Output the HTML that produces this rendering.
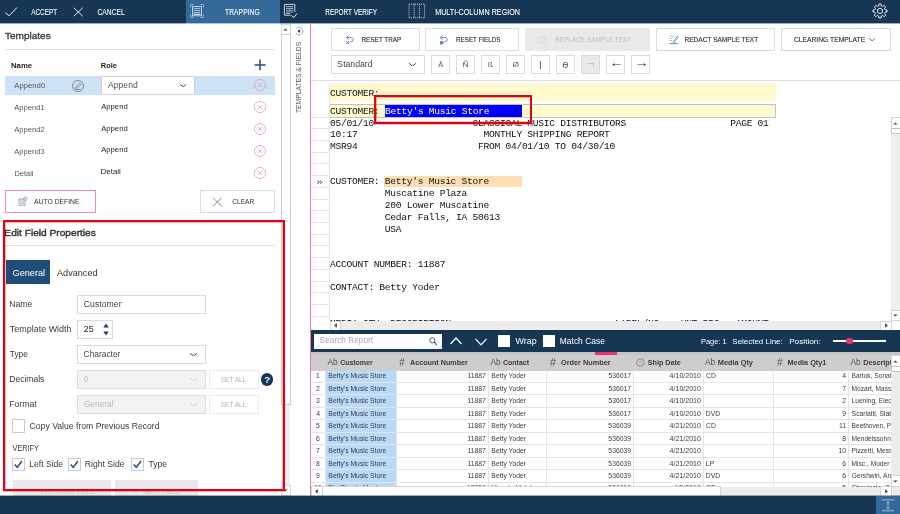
<!DOCTYPE html>
<html><head><meta charset="utf-8"><title>Trapping</title>
<style>
*{box-sizing:border-box;margin:0;padding:0}
html,body{width:900px;height:514px;overflow:hidden;background:#fff}
body{font-family:"Liberation Sans",sans-serif;font-size:9px;color:#333;position:relative}
#app{position:absolute;left:0;top:0;width:900px;height:514px;overflow:hidden;will-change:transform}
.a{position:absolute}
.t{position:absolute;white-space:nowrap;line-height:1;transform-origin:0 0}
.m{position:absolute;white-space:pre;font-family:"Liberation Mono","DejaVu Sans Mono",monospace;font-size:9.6px;letter-spacing:-0.275px;line-height:11.78px;color:#111}
</style></head><body>
<div id="app">
<div class="a" style="left:0px;top:0px;width:900px;height:23.4px;background:#173654;"></div>
<div class="a" style="left:185.75px;top:0px;width:94.25px;height:23.4px;background:#336a99;"></div>
<div class="a" style="left:0px;top:23px;width:900px;height:1px;background:#a2afbb;"></div>
<div class="a" style="left:186px;top:23px;width:94px;height:1px;background:#acc2d6;"></div>
<svg class="a" style="left:4px;top:6px" width="15" height="12" viewBox="0 0 15 12"><path d="M1.3 6.7L5.2 9.8L13 1.5" stroke="#fff" stroke-width="0.9" fill="none"/></svg>
<span class="t" style="left:0;top:8px;font-size:8.5px;color:#fff;transform:matrix(0.752,0,0,1,31.20,0);-webkit-text-stroke:0.08px #fff;">ACCEPT</span>
<svg class="a" style="left:73px;top:7px" width="11" height="10" viewBox="0 0 11 10"><path d="M0.8 0.8L9.8 9.2M9.8 0.8L0.8 9.2" stroke="#fff" stroke-width="0.9" fill="none"/></svg>
<span class="t" style="left:0;top:8px;font-size:8.5px;color:#fff;transform:matrix(0.790,0,0,1,97.48,0);-webkit-text-stroke:0.08px #fff;">CANCEL</span>
<svg class="a" style="left:189px;top:3px" width="16" height="16" viewBox="0 0 16 16"><path d="M1.5 4.3V2.5Q1.5 1.5 2.5 1.5H4.3M11.7 1.5H13.5Q14.5 1.5 14.5 2.5V4.3M14.5 11.7V13.5Q14.5 14.5 13.5 14.5H11.7M4.3 14.5H2.5Q1.5 14.5 1.5 13.5V11.7" stroke="#c3d5e6" stroke-width="0.8" fill="none"/><rect x="3.5" y="3.6" width="9" height="9.2" fill="none" stroke="#dce7f1" stroke-width="0.85"/><path d="M4.8 5.5H11.2M4.8 7.5H11.2M4.8 9.5H11.2" stroke="#dbe7f2" stroke-width="0.7"/><path d="M4.6 11.3H11.4" stroke="#b9cde0" stroke-width="1.4"/></svg>
<span class="t" style="left:0;top:8px;font-size:8.5px;color:#fff;transform:matrix(0.796,0,0,1,225.09,0);-webkit-text-stroke:0.08px #fff;">TRAPPING</span>
<svg class="a" style="left:283px;top:3px" width="16" height="16" viewBox="0 0 16 16"><path d="M11.8 9V1.4H1.4V12.2H7.5" fill="none" stroke="#e0e8f0" stroke-width="0.9"/><path d="M3 3.6H10.2M3 5.4H10.2M3 7.2H10.2M3 9H10.2M3 10.6H7" stroke="#c8d4e0" stroke-width="0.8"/><path d="M8.4 12.4L10.8 14.6L14 10.6" fill="none" stroke="#fff" stroke-width="0.9"/></svg>
<span class="t" style="left:0;top:8px;font-size:8.5px;color:#fff;transform:matrix(0.760,0,0,1,325.22,0);-webkit-text-stroke:0.08px #fff;">REPORT VERIFY</span>
<svg class="a" style="left:408px;top:3px" width="18" height="16" viewBox="0 0 18 16"><rect x="1" y="1.2" width="15.6" height="13.6" fill="none" stroke="#dfe8f0" stroke-width="0.9" stroke-dasharray="1 1"/><path d="M6.2 1.2V14.8M11.4 1.2V14.8" stroke="#dfe8f0" stroke-width="0.9" stroke-dasharray="1 1"/></svg>
<span class="t" style="left:0;top:8px;font-size:8.5px;color:#fff;transform:matrix(0.845,0,0,1,435.16,0);-webkit-text-stroke:0.08px #fff;">MULTI-COLUMN REGION</span>
<svg class="a" style="left:872.3px;top:3.1px" width="16" height="16" viewBox="0 0 16 16"><g transform="translate(8,8)" fill="none" stroke="#fff" stroke-width="0.85"><circle r="2.6"/><path d="M5.03 -1.34L7.03 -0.99L7.03 0.99L5.03 1.34L4.50 2.61L5.67 4.27L4.27 5.67L2.61 4.50L1.34 5.03L0.99 7.03L-0.99 7.03L-1.34 5.03L-2.61 4.50L-4.27 5.67L-5.67 4.27L-4.50 2.61L-5.03 1.34L-7.03 0.99L-7.03 -0.99L-5.03 -1.34L-4.50 -2.61L-5.67 -4.27L-4.27 -5.67L-2.61 -4.50L-1.34 -5.03L-0.99 -7.03L0.99 -7.03L1.34 -5.03L2.61 -4.50L4.27 -5.67L5.67 -4.27L4.50 -2.61Z"/></g></svg>
<span class="t" style="left:0;top:31px;font-size:9.6px;color:#444;transform:matrix(1.044,0,0,1,4.99,0);-webkit-text-stroke:0.4px #444;">Templates</span>
<div class="a" style="left:5px;top:48.5px;width:269.5px;height:1.0px;background:#dedede;"></div>
<span class="t" style="left:0;top:62px;font-size:7.2px;color:#222;transform:matrix(1.085,0,0,1,10.96,0);font-weight:700;">Name</span>
<span class="t" style="left:0;top:62px;font-size:7.2px;color:#222;transform:matrix(1.040,0,0,1,100.73,0);font-weight:700;">Role</span>
<svg class="a" style="left:254px;top:59px" width="12" height="12" viewBox="0 0 12 12"><path d="M6 0.5V11.3M0.6 5.9H11.6" stroke="#1f4e79" stroke-width="1.5" fill="none"/></svg>
<div class="a" style="left:5px;top:76px;width:269.5px;height:19px;background:#cde1f7;"></div>
<span class="t" style="left:0;top:82px;font-size:7.4px;color:#555;transform:matrix(1.046,0,0,1,14.25,0);">Append0</span>
<svg class="a" style="left:72px;top:79.75px" width="12" height="12" viewBox="0 0 12 12"><circle cx="6" cy="6" r="5.5" fill="none" stroke="#666" stroke-width="0.7"/><path d="M3.4 8.7L3.9 6.9L7.7 3.1L8.9 4.3L5.1 8.1Z" stroke="#666" stroke-width="0.65" fill="none"/><path d="M3.6 9.4H8.6" stroke="#666" stroke-width="0.6"/></svg>
<div class="a" style="left:101px;top:76px;width:94px;height:19px;background:#fff;border:1px solid #d0d0d0;"></div>
<span class="t" style="left:0;top:81px;font-size:8.6px;color:#555;transform:matrix(1.005,0,0,1,108.00,0);">Append</span>
<svg class="a" style="left:180px;top:84px" width="6.400000000000006" height="3.4000000000000057" viewBox="0 0 6.400000000000006 3.4000000000000057"><path d="M0.3 0.4L3.200000000000003 2.9000000000000057L6.100000000000006 0.4" stroke="#444" stroke-width="1" fill="none"/></svg>
<span class="t" style="left:0;top:104px;font-size:7.4px;color:#555;transform:matrix(1.026,0,0,1,14.25,0);">Append1</span>
<span class="t" style="left:0;top:103px;font-size:7.4px;color:#222;transform:matrix(1.036,0,0,1,101.25,0);">Append</span>
<span class="t" style="left:0;top:126px;font-size:7.4px;color:#555;transform:matrix(1.026,0,0,1,14.25,0);">Append2</span>
<span class="t" style="left:0;top:125px;font-size:7.4px;color:#222;transform:matrix(1.036,0,0,1,101.25,0);">Append</span>
<span class="t" style="left:0;top:148px;font-size:7.4px;color:#555;transform:matrix(1.026,0,0,1,14.25,0);">Append3</span>
<span class="t" style="left:0;top:146px;font-size:7.4px;color:#222;transform:matrix(1.036,0,0,1,101.25,0);">Append</span>
<span class="t" style="left:0;top:170px;font-size:7.4px;color:#555;transform:matrix(1.011,0,0,1,14.39,0);">Detail</span>
<span class="t" style="left:0;top:168px;font-size:7.4px;color:#222;transform:matrix(1.067,0,0,1,100.61,0);">Detail</span>
<svg class="a" style="left:254.1px;top:79.3px" width="12" height="12" viewBox="0 0 12 12"><circle cx="6" cy="6" r="5.6" fill="none" stroke="#e8919f" stroke-width="0.7"/><path d="M3.8 3.8L8.2 8.2M8.2 3.8L3.8 8.2" stroke="#e8919f" stroke-width="0.7"/></svg>
<svg class="a" style="left:254.1px;top:101.3px" width="12" height="12" viewBox="0 0 12 12"><circle cx="6" cy="6" r="5.6" fill="none" stroke="#e8919f" stroke-width="0.7"/><path d="M3.8 3.8L8.2 8.2M8.2 3.8L3.8 8.2" stroke="#e8919f" stroke-width="0.7"/></svg>
<svg class="a" style="left:254.1px;top:123.2px" width="12" height="12" viewBox="0 0 12 12"><circle cx="6" cy="6" r="5.6" fill="none" stroke="#e8919f" stroke-width="0.7"/><path d="M3.8 3.8L8.2 8.2M8.2 3.8L3.8 8.2" stroke="#e8919f" stroke-width="0.7"/></svg>
<svg class="a" style="left:254.1px;top:145.10000000000002px" width="12" height="12" viewBox="0 0 12 12"><circle cx="6" cy="6" r="5.6" fill="none" stroke="#e8919f" stroke-width="0.7"/><path d="M3.8 3.8L8.2 8.2M8.2 3.8L3.8 8.2" stroke="#e8919f" stroke-width="0.7"/></svg>
<svg class="a" style="left:254.1px;top:167.0px" width="12" height="12" viewBox="0 0 12 12"><circle cx="6" cy="6" r="5.6" fill="none" stroke="#e8919f" stroke-width="0.7"/><path d="M3.8 3.8L8.2 8.2M8.2 3.8L3.8 8.2" stroke="#e8919f" stroke-width="0.7"/></svg>
<div class="a" style="left:5px;top:190px;width:91px;height:23px;background:#fff;border:1px solid #f48aa8;"></div>
<svg class="a" style="left:17.5px;top:196px" width="10" height="10" viewBox="0 0 10 10"><rect x="0.9" y="2.9" width="6.2" height="6.4" fill="none" stroke="#4a6a8c" stroke-width="0.8" stroke-dasharray="0.9 0.5"/><path d="M3 3V9.2M5 3V9.2M1 5H7M1 7.1H7" stroke="#6f8cab" stroke-width="0.7" stroke-dasharray="0.8 0.6"/><path d="M7.4 0.4L8 2L9.6 2.6L8 3.2L7.4 4.8L6.8 3.2L5.2 2.6L6.8 2Z" fill="#fff" stroke="#5f7f9f" stroke-width="0.55"/></svg>
<span class="t" style="left:0;top:198px;font-size:8px;color:#303030;transform:matrix(0.849,0,0,1,34.00,0);">AUTO DEFINE</span>
<div class="a" style="left:200px;top:190px;width:75px;height:23px;background:#fff;border:1px solid #dcdcdc;"></div>
<svg class="a" style="left:212px;top:196.5px" width="11" height="10" viewBox="0 0 11 10"><path d="M0.7 0.6L10 9.4M10 0.6L0.7 9.4" stroke="#44658a" stroke-width="0.7" fill="none"/></svg>
<span class="t" style="left:0;top:198px;font-size:8px;color:#303030;transform:matrix(0.830,0,0,1,232.17,0);">CLEAR</span>
<span class="t" style="left:0;top:228px;font-size:9.8px;color:#333;transform:matrix(1.037,0,0,1,4.37,0);-webkit-text-stroke:0.4px #333;">Edit Field Properties</span>
<div class="a" style="left:5px;top:244.7px;width:269.5px;height:1.0px;background:#dedede;"></div>
<div class="a" style="left:6.25px;top:259.75px;width:43.95px;height:24.25px;background:#1f4e79;"></div>
<span class="t" style="left:0;top:268px;font-size:9.8px;color:#fff;transform:matrix(0.935,0,0,1,12.53,0);">General</span>
<span class="t" style="left:0;top:268px;font-size:9.8px;color:#333;transform:matrix(0.930,0,0,1,57.00,0);">Advanced</span>
<span class="t" style="left:0;top:300px;font-size:8.3px;color:#3a3a3a;transform:matrix(1.043,0,0,1,9.27,0);">Name</span>
<div class="a" style="left:77px;top:295px;width:129px;height:19px;background:#fff;border:1px solid #dadada;"></div>
<span class="t" style="left:0;top:300px;font-size:8.3px;color:#444;transform:matrix(1.049,0,0,1,83.83,0);">Customer</span>
<span class="t" style="left:0;top:325px;font-size:8.3px;color:#3a3a3a;transform:matrix(1.080,0,0,1,9.78,0);">Template Width</span>
<div class="a" style="left:77px;top:320px;width:36px;height:19px;background:#fff;border:1px solid #dadada;"></div>
<span class="t" style="left:0;top:325px;font-size:8.3px;color:#222;transform:matrix(1.059,0,0,1,83.83,0);">25</span>
<svg class="a" style="left:102.7px;top:322.6px" width="6" height="13" viewBox="0 0 6 13"><path d="M3 0.6L5.7 4.4H0.3Z M3 12.4L5.7 8.6H0.3Z" fill="#1b4166"/></svg>
<span class="t" style="left:0;top:350px;font-size:8.3px;color:#3a3a3a;transform:matrix(1.006,0,0,1,9.80,0);">Type</span>
<div class="a" style="left:77px;top:345px;width:129px;height:19px;background:#fff;border:1px solid #dadada;"></div>
<span class="t" style="left:0;top:350px;font-size:8.3px;color:#444;transform:matrix(1.010,0,0,1,83.60,0);">Character</span>
<svg class="a" style="left:190px;top:352.6px" width="7" height="3.599999999999966" viewBox="0 0 7 3.599999999999966"><path d="M0.3 0.4L3.5 3.099999999999966L6.7 0.4" stroke="#333" stroke-width="1" fill="none"/></svg>
<span class="t" style="left:0;top:375px;font-size:8.3px;color:#3a3a3a;transform:matrix(1.027,0,0,1,9.28,0);">Decimals</span>
<div class="a" style="left:77px;top:370px;width:129px;height:19px;background:#f3f3f3;border:1px solid #dcdcdc;"></div>
<span class="t" style="left:0;top:375px;font-size:8.3px;color:#b8b8b8;transform:matrix(0.925,0,0,1,84.02,0);">0</span>
<svg class="a" style="left:190px;top:377.6px" width="7" height="3.599999999999966" viewBox="0 0 7 3.599999999999966"><path d="M0.3 0.4L3.5 3.099999999999966L6.7 0.4" stroke="#c4c4c4" stroke-width="0.8" fill="none"/></svg>
<div class="a" style="left:209px;top:370px;width:50px;height:19px;background:#fff;border:1px solid #ececec;"></div>
<span class="t" style="left:0;top:376px;font-size:7.6px;color:#b4b4b4;transform:matrix(0.853,0,0,1,220.74,0);">SET ALL</span>
<div class="a" style="left:260.75px;top:373.1px;width:12.6px;height:12.6px;border-radius:50%;background:#173654"></div>
<span class="t" style="left:0;top:376px;font-size:8.6px;color:#fff;transform:matrix(1.136,0,0,1,264.15,0);font-weight:700;">?</span>
<span class="t" style="left:0;top:400px;font-size:8.3px;color:#3a3a3a;transform:matrix(1.039,0,0,1,9.27,0);">Format</span>
<div class="a" style="left:77px;top:395px;width:129px;height:19px;background:#f3f3f3;border:1px solid #dcdcdc;"></div>
<span class="t" style="left:0;top:400px;font-size:8.3px;color:#b8b8b8;transform:matrix(1.003,0,0,1,83.90,0);">General</span>
<svg class="a" style="left:190px;top:402.6px" width="7" height="3.599999999999966" viewBox="0 0 7 3.599999999999966"><path d="M0.3 0.4L3.5 3.099999999999966L6.7 0.4" stroke="#c4c4c4" stroke-width="0.8" fill="none"/></svg>
<div class="a" style="left:209px;top:395px;width:50px;height:19px;background:#fff;border:1px solid #ececec;"></div>
<span class="t" style="left:0;top:401px;font-size:7.6px;color:#b4b4b4;transform:matrix(0.853,0,0,1,220.74,0);">SET ALL</span>
<div class="a" style="left:12px;top:419px;width:13px;height:14px;background:#fff;border:1px solid #c9c9c9;"></div>
<span class="t" style="left:0;top:422px;font-size:8.3px;color:#3a3a3a;transform:matrix(1.041,0,0,1,29.58,0);">Copy Value from Previous Record</span>
<span class="t" style="left:0;top:444px;font-size:8.3px;color:#3a3a3a;transform:matrix(0.881,0,0,1,12.50,0);">VERIFY</span>
<div class="a" style="left:12px;top:458px;width:13px;height:13px;background:#fff;border:1px solid #c9c9c9;"></div>
<svg class="a" style="left:14.25px;top:460px" width="9" height="9" viewBox="0 0 9 9"><path d="M0.7 4.4L3.2 7.4L8 1" stroke="#1f4e79" stroke-width="1.5" fill="none"/></svg>
<div class="a" style="left:68px;top:458px;width:13px;height:13px;background:#fff;border:1px solid #c9c9c9;"></div>
<svg class="a" style="left:70px;top:460px" width="9" height="9" viewBox="0 0 9 9"><path d="M0.7 4.4L3.2 7.4L8 1" stroke="#1f4e79" stroke-width="1.5" fill="none"/></svg>
<div class="a" style="left:131px;top:458px;width:13px;height:13px;background:#fff;border:1px solid #c9c9c9;"></div>
<svg class="a" style="left:133px;top:460px" width="9" height="9" viewBox="0 0 9 9"><path d="M0.7 4.4L3.2 7.4L8 1" stroke="#1f4e79" stroke-width="1.5" fill="none"/></svg>
<span class="t" style="left:0;top:460px;font-size:8.3px;color:#3a3a3a;transform:matrix(1.033,0,0,1,29.28,0);">Left Side</span>
<span class="t" style="left:0;top:460px;font-size:8.3px;color:#3a3a3a;transform:matrix(1.042,0,0,1,84.77,0);">Right Side</span>
<span class="t" style="left:0;top:460px;font-size:8.3px;color:#3a3a3a;transform:matrix(1.034,0,0,1,148.54,0);">Type</span>
<div class="a" style="left:12.5px;top:480px;width:98.75px;height:15.6px;background:#e8e8e8;"></div>
<div class="a" style="left:115px;top:480px;width:82.5px;height:15.6px;background:#e8e8e8;"></div>
<span class="t" style="left:0;top:488px;font-size:7.6px;color:#c2c2c2;transform:matrix(0.867,0,0,1,40.73,0);">PREVIOUS FIELD</span>
<span class="t" style="left:0;top:488px;font-size:7.6px;color:#c2c2c2;transform:matrix(0.855,0,0,1,143.24,0);">NEXT FIELD</span>
<span class="t" style="left:0;top:488px;font-size:7.6px;color:#c8c8c8;transform:matrix(1.053,0,0,1,25.68,0);">‹</span>
<span class="t" style="left:0;top:488px;font-size:7.6px;color:#c8c8c8;transform:matrix(1.053,0,0,1,134.18,0);">›</span>
<div class="a" style="left:281.5px;top:24px;width:8.5px;height:471.6px;background:#f0f0f0;"></div>
<div class="a" style="left:281px;top:24px;width:10px;height:11px;background:#fff;border:1px solid #d8d8d8;"></div>
<div class="a" style="left:281px;top:34px;width:10px;height:371px;background:#fff;border:1px solid #cdcdcd;"></div>
<div class="a" style="left:281px;top:485px;width:10px;height:11px;background:#fff;border:1px solid #d8d8d8;"></div>
<svg class="a" style="left:283.4px;top:28.3px" width="4.8" height="3" viewBox="0 0 4.8 3"><path d="M0.2 2.6L2.4 0.5L4.6 2.6Z" fill="#444"/></svg>
<svg class="a" style="left:283.4px;top:489.3px" width="4.8" height="3" viewBox="0 0 4.8 3"><path d="M0.2 0.4L2.4 2.5L4.6 0.4Z" fill="#444"/></svg>
<div class="a" style="left:3px;top:220px;width:282px;height:271px;border:2px solid #e30016"></div>
<div class="a" style="left:5px;top:222px;width:278px;height:1px;background:rgba(227,0,22,0.3);"></div>
<div class="a" style="left:5px;top:223px;width:1px;height:266px;background:rgba(227,0,22,0.3);"></div>
<div class="a" style="left:282px;top:223px;width:1px;height:266px;background:rgba(227,0,22,0.3);"></div>
<div class="a" style="left:3px;top:491px;width:282px;height:1px;background:rgba(227,0,22,0.3);"></div>
<svg class="a" style="left:294.2px;top:26px" width="10" height="10" viewBox="0 0 10 10"><path d="M2.2 7.6A3.9 3.9 0 1 0 2.2 2.4" fill="none" stroke="#5f8fc0" stroke-width="0.65"/><path d="M6.1 3V7L3.2 5Z" fill="#1f4e79"/></svg>
<span class="t" style="left:295.00px;top:112.93px;font-size:8px;color:#5a5a5a;transform:rotate(-90deg) scaleX(0.840);transform-origin:0 0;">TEMPLATES &amp; FIELDS</span>
<div class="a" style="left:310px;top:23.4px;width:1px;height:472.2px;background:#f27a9b;"></div>
<div class="a" style="left:331px;top:28px;width:89px;height:23px;background:#fff;border:1px solid #dcdcdc;"></div>
<svg class="a" style="left:345px;top:34.6px" width="10" height="10" viewBox="0 0 10 10"><path d="M1.6 2.5H6.1A2.15 2.15 0 0 1 6.1 6.8H5.2" fill="none" stroke="#5b7c9c" stroke-width="0.85"/><path d="M3.5 0.5L1.5 2.5L3.5 4.5" fill="none" stroke="#5b7c9c" stroke-width="0.85"/><path d="M1 6L4.2 9.2M4.2 6L1 9.2" stroke="#3f6288" stroke-width="0.85"/></svg>
<span class="t" style="left:0;top:36px;font-size:7.8px;color:#303030;transform:matrix(0.818,0,0,1,361.51,0);-webkit-text-stroke:0.15px #303030;">RESET TRAP</span>
<div class="a" style="left:425px;top:28px;width:94px;height:23px;background:#fff;border:1px solid #dcdcdc;"></div>
<svg class="a" style="left:439.3px;top:34.6px" width="10" height="10" viewBox="0 0 10 10"><path d="M1.6 2.5H6.1A2.15 2.15 0 0 1 6.1 6.8H5.2" fill="none" stroke="#5b7c9c" stroke-width="0.85"/><path d="M3.5 0.5L1.5 2.5L3.5 4.5" fill="none" stroke="#5b7c9c" stroke-width="0.85"/><rect x="1" y="6" width="3.2" height="3.4" fill="#7d98b4"/><path d="M1 7.2H4.2M1 8.4H4.2" stroke="#4a6a8c" stroke-width="0.5"/></svg>
<span class="t" style="left:0;top:36px;font-size:7.8px;color:#303030;transform:matrix(0.803,0,0,1,456.02,0);-webkit-text-stroke:0.15px #303030;">RESET FIELDS</span>
<div class="a" style="left:525px;top:28px;width:125px;height:23px;background:#e9e9e9;"></div>
<svg class="a" style="left:538.5px;top:35.6px" width="8" height="8" viewBox="0 0 8 8"><path d="M1 3A3 3 0 0 1 6.4 2.2M7 5A3 3 0 0 1 1.6 5.8" fill="none" stroke="#d2d2d2" stroke-width="0.8"/><path d="M5.2 2.4H6.8V0.8M2.8 5.6H1.2V7.2" fill="none" stroke="#d2d2d2" stroke-width="0.7"/></svg>
<span class="t" style="left:0;top:36px;font-size:7.8px;color:#bcbcbc;transform:matrix(0.827,0,0,1,555.00,0);">REPLACE SAMPLE TEXT</span>
<div class="a" style="left:656px;top:28px;width:119px;height:23px;background:#fff;border:1px solid #dcdcdc;"></div>
<svg class="a" style="left:669px;top:35px" width="10" height="9.5" viewBox="0 0 10 9.5"><path d="M0.6 1.2H5.6M0.6 3.4H4.2M0.6 5.6H3" stroke="#9fb2c6" stroke-width="0.8"/><path d="M4 6.8L8.2 1.4L9.2 2.2L5.2 7.4Z" fill="none" stroke="#4a6d90" stroke-width="0.7"/><path d="M0.4 8.6H9.2" stroke="#5b7c9c" stroke-width="0.9"/></svg>
<span class="t" style="left:0;top:36px;font-size:7.8px;color:#303030;transform:matrix(0.840,0,0,1,684.50,0);-webkit-text-stroke:0.15px #303030;">REDACT SAMPLE TEXT</span>
<div class="a" style="left:781px;top:28px;width:110px;height:23px;background:#fff;border:1px solid #dcdcdc;"></div>
<span class="t" style="left:0;top:36px;font-size:7.8px;color:#303030;transform:matrix(0.864,0,0,1,793.90,0);-webkit-text-stroke:0.15px #303030;">CLEARING TEMPLATE</span>
<svg class="a" style="left:868.75px;top:38px" width="6.25" height="3.299999999999997" viewBox="0 0 6.25 3.299999999999997"><path d="M0.3 0.4L3.125 2.799999999999997L5.95 0.4" stroke="#555" stroke-width="0.85" fill="none"/></svg>
<div class="a" style="left:331px;top:55px;width:94px;height:19px;background:#fff;border:1px solid #dcdcdc;"></div>
<span class="t" style="left:0;top:60px;font-size:8.8px;color:#444;transform:matrix(0.984,0,0,1,337.36,0);">Standard</span>
<svg class="a" style="left:409px;top:62.6px" width="7" height="3.6000000000000014" viewBox="0 0 7 3.6000000000000014"><path d="M0.3 0.4L3.5 3.1000000000000014L6.7 0.4" stroke="#333" stroke-width="1" fill="none"/></svg>
<div class="a" style="left:431px;top:55px;width:19px;height:19px;background:#fff;border:1px solid #dcdcdc;"></div>
<span class="t" style="left:0;top:61px;font-size:7px;color:#555;transform:matrix(1.064,0,0,1,438.25,0);">Ā</span>
<div class="a" style="left:456px;top:55px;width:19px;height:19px;background:#fff;border:1px solid #dcdcdc;"></div>
<span class="t" style="left:0;top:61px;font-size:7px;color:#555;transform:matrix(1.250,0,0,1,462.38,0);">Ñ</span>
<div class="a" style="left:481px;top:55px;width:19px;height:19px;background:#fff;border:1px solid #dcdcdc;"></div>
<span class="t" style="left:0;top:61px;font-size:7.6px;color:#555;transform:matrix(1.128,0,0,1,487.84,0);">ß</span>
<div class="a" style="left:506px;top:55px;width:19px;height:19px;background:#fff;border:1px solid #dcdcdc;"></div>
<span class="t" style="left:0;top:61px;font-size:7.2px;color:#555;transform:matrix(1.160,0,0,1,512.45,0);">Ø</span>
<div class="a" style="left:531px;top:55px;width:19px;height:19px;background:#fff;border:1px solid #dcdcdc;"></div>
<div class="a" style="left:540px;top:61.4px;width:1px;height:7.2px;background:#6a6a6a;"></div>
<div class="a" style="left:556px;top:55px;width:19px;height:19px;background:#fff;border:1px solid #dcdcdc;"></div>
<span class="t" style="left:0;top:60px;font-size:10px;color:#666;transform:matrix(1.125,0,0,1,562.15,0);">ɵ</span>
<div class="a" style="left:581px;top:55px;width:19px;height:19px;background:#e9e9e9;border:1px solid #dadada;"></div>
<span class="t" style="left:0;top:58px;font-size:12px;color:#c4c4c4;transform:matrix(1.103,0,0,1,586.74,0);">¬</span>
<div class="a" style="left:606px;top:55px;width:19px;height:19px;background:#fff;border:1px solid #dcdcdc;"></div>
<span class="t" style="left:0;top:56px;font-size:13px;color:#333;transform:matrix(1.094,0,0,1,609.34,0);font-family:"DejaVu Sans",sans-serif;">←</span>
<div class="a" style="left:631px;top:55px;width:19px;height:19px;background:#fff;border:1px solid #dcdcdc;"></div>
<span class="t" style="left:0;top:56px;font-size:13px;color:#333;transform:matrix(1.094,0,0,1,634.23,0);font-family:"DejaVu Sans",sans-serif;">→</span>
<div class="a" style="left:311px;top:80px;width:589px;height:1px;background:#dedede;"></div>
<div class="a" style="left:329.5px;top:83px;width:446.1px;height:1px;background:#fdfbe6;"></div>
<div class="a" style="left:329.5px;top:84.25px;width:446.1px;height:17.05px;background:#fffacd;"></div>
<div class="a" style="left:329px;top:104px;width:447px;height:14px;background:#fffacd;border:1px solid #c2c2c2;"></div>
<div class="a" style="left:385px;top:105px;width:137px;height:11.75px;background:#0000fc;"></div>
<div class="a" style="left:384.25px;top:175.75px;width:137.5px;height:11.25px;background:#fbdfb3;"></div>
<div class="a" style="left:329.2px;top:84px;width:0.8px;height:237px;background:#e6e6e6;"></div>
<div class="a" style="left:311px;top:116.55px;width:18.5px;height:1.0px;background:#e4e4e4;"></div>
<div class="a" style="left:311px;top:128.27px;width:18.5px;height:1.0px;background:#e4e4e4;"></div>
<div class="a" style="left:311px;top:139.99px;width:18.5px;height:1.0px;background:#e4e4e4;"></div>
<div class="a" style="left:311px;top:151.71px;width:18.5px;height:1.0px;background:#e4e4e4;"></div>
<div class="a" style="left:311px;top:163.43px;width:18.5px;height:1.0px;background:#e4e4e4;"></div>
<div class="a" style="left:311px;top:175.15px;width:18.5px;height:1.0px;background:#e4e4e4;"></div>
<div class="a" style="left:311px;top:186.87px;width:18.5px;height:1.0px;background:#e4e4e4;"></div>
<div class="a" style="left:311px;top:198.59px;width:18.5px;height:1.0px;background:#e4e4e4;"></div>
<div class="a" style="left:311px;top:210.31px;width:18.5px;height:1.0px;background:#e4e4e4;"></div>
<div class="a" style="left:311px;top:222.03px;width:18.5px;height:1.0px;background:#e4e4e4;"></div>
<div class="a" style="left:311px;top:233.75px;width:18.5px;height:1.0px;background:#e4e4e4;"></div>
<div class="a" style="left:311px;top:245.47px;width:18.5px;height:1.0px;background:#e4e4e4;"></div>
<div class="a" style="left:311px;top:257.19px;width:18.5px;height:1.0px;background:#e4e4e4;"></div>
<div class="a" style="left:311px;top:268.91px;width:18.5px;height:1.0px;background:#e4e4e4;"></div>
<div class="a" style="left:311px;top:280.63px;width:18.5px;height:1.0px;background:#e4e4e4;"></div>
<div class="a" style="left:311px;top:292.35px;width:18.5px;height:1.0px;background:#e4e4e4;"></div>
<div class="a" style="left:311px;top:304.07px;width:18.5px;height:1.0px;background:#e4e4e4;"></div>
<div class="a" style="left:311px;top:315.79px;width:18.5px;height:1.0px;background:#e4e4e4;"></div>
<div class="m" style="left:330px;top:88.05px;color:#111;">CUSTOMER:</div>
<div class="m" style="left:330px;top:106.30px;color:#111;">CUSTOMER: </div>
<div class="m" style="left:385px;top:106.30px;color:#fff;">Betty&#x27;s Music Store</div>
<div class="a" style="left:423.4px;top:105px;width:0.8px;height:11.75px;background:#101060;"></div>
<div class="m" style="left:330px;top:117.55px;width:561.3px;height:203.65px;overflow:hidden">05/01/10                  CLASSICAL MUSIC DISTRIBUTORS                   PAGE 01
10:17                       MONTHLY SHIPPING REPORT
MSR94                      FROM 04/01/10 TO 04/30/10


CUSTOMER: Betty&#x27;s Music Store
          Muscatine Plaza
          200 Lower Muscatine
          Cedar Falls, IA 50613
          USA


ACCOUNT NUMBER: 11887

CONTACT: Betty Yoder


MEDIA QTY  DESCRIPTION                              LABEL/NO.   UNT PRC   AMOUNT</div>
<span class="t" style="left:0;top:178px;font-size:9px;color:#444;transform:matrix(1.250,0,0,1,316.62,0);">»</span>
<div class="a" style="left:374px;top:95px;width:158px;height:29px;border:2px solid #e30016"></div>
<div class="a" style="left:376px;top:97px;width:154px;height:1px;background:rgba(227,0,22,0.3);"></div>
<div class="a" style="left:376px;top:98px;width:1px;height:24px;background:rgba(227,0,22,0.35);"></div>
<div class="a" style="left:374px;top:124px;width:158px;height:1px;background:rgba(227,0,22,0.25);"></div>
<div class="a" style="left:376px;top:121px;width:154px;height:1px;background:rgba(227,0,22,0.25);"></div>
<div class="a" style="left:891.3px;top:117.2px;width:8.7px;height:203.8px;background:#efefef;"></div>
<div class="a" style="left:891px;top:117px;width:10px;height:12px;background:#fff;border:1px solid #d4d4d4;"></div>
<div class="a" style="left:891px;top:128px;width:10px;height:6px;background:#fff;border:1px solid #c4c4c4;"></div>
<div class="a" style="left:891px;top:310px;width:10px;height:11px;background:#fff;border:1px solid #d4d4d4;"></div>
<div class="a" style="left:891.3px;top:320.6px;width:8.7px;height:9.4px;background:#fff;"></div>
<svg class="a" style="left:893.4px;top:121.5px" width="4.8" height="3" viewBox="0 0 4.8 3"><path d="M0.2 2.6L2.4 0.5L4.6 2.6Z" fill="#444"/></svg>
<svg class="a" style="left:893.4px;top:314.3px" width="4.8" height="3" viewBox="0 0 4.8 3"><path d="M0.2 0.4L2.4 2.5L4.6 0.4Z" fill="#444"/></svg>
<div class="a" style="left:330px;top:321.1px;width:561.3px;height:8.9px;background:#ececec;"></div>
<div class="a" style="left:330px;top:321px;width:11px;height:10px;background:#fff;border:1px solid #d4d4d4;"></div>
<div class="a" style="left:880px;top:321px;width:12px;height:10px;background:#fff;border:1px solid #d4d4d4;"></div>
<svg class="a" style="left:333.6px;top:323.4px" width="3" height="4.8" viewBox="0 0 3 4.8"><path d="M2.9 0L0.1 2.4L2.9 4.8Z" fill="#444"/></svg>
<svg class="a" style="left:884.9px;top:323.4px" width="3" height="4.8" viewBox="0 0 3 4.8"><path d="M0.1 0L2.9 2.4L0.1 4.8Z" fill="#444"/></svg>
<div class="a" style="left:311px;top:330px;width:589px;height:22.1px;background:#173654;"></div>
<div class="a" style="left:314.25px;top:334.25px;width:127.5px;height:14.35px;background:#fff;"></div>
<span class="t" style="left:0;top:336px;font-size:8.4px;color:#a9a9a9;transform:matrix(0.992,0,0,1,319.60,0);">Search Report</span>
<svg class="a" style="left:428.5px;top:337.2px" width="8.5" height="8.5" viewBox="0 0 8.5 8.5"><circle cx="3.3" cy="3.3" r="2.6" fill="none" stroke="#2a5a8a" stroke-width="0.9"/><path d="M5.2 5.2L8 8" stroke="#2a5a8a" stroke-width="1.1"/></svg>
<svg class="a" style="left:450px;top:337px" width="12" height="8" viewBox="0 0 12 8"><path d="M0.5 7L6 1L11.5 7" stroke="#fff" stroke-width="1.2" fill="none"/></svg>
<svg class="a" style="left:475px;top:337.5px" width="12" height="8" viewBox="0 0 12 8"><path d="M0.5 0.8L6 6.8L11.5 0.8" stroke="#fff" stroke-width="1.2" fill="none"/></svg>
<div class="a" style="left:498.25px;top:334.9px;width:12.15px;height:12.1px;background:#fff;"></div>
<span class="t" style="left:0;top:337px;font-size:8.8px;color:#fff;transform:matrix(1.012,0,0,1,515.50,0);">Wrap</span>
<div class="a" style="left:542.5px;top:334.9px;width:12.5px;height:12.1px;background:#fff;"></div>
<span class="t" style="left:0;top:337px;font-size:8.8px;color:#fff;transform:matrix(0.959,0,0,1,559.83,0);">Match Case</span>
<span class="t" style="left:0;top:338px;font-size:8px;color:#fff;transform:matrix(0.930,0,0,1,700.94,0);">Page: 1</span>
<span class="t" style="left:0;top:338px;font-size:8px;color:#fff;transform:matrix(0.993,0,0,1,732.35,0);">Selected Line:</span>
<span class="t" style="left:0;top:338px;font-size:8px;color:#fff;transform:matrix(1.029,0,0,1,789.13,0);">Position:</span>
<div class="a" style="left:833px;top:340.3px;width:52.5px;height:1.9px;background:#fff;"></div>
<div class="a" style="left:846.4px;top:338.2px;width:6.2px;height:6.2px;border-radius:50%;background:#ee3366"></div>
<div class="a" style="left:311px;top:352.1px;width:589px;height:18.5px;background:#cdcdcd;"></div>
<div class="a" style="left:311px;top:352.1px;width:589px;height:3.3px;background:#c5c5c5;"></div>
<div class="a" style="left:595px;top:351.8px;width:21.5px;height:3.0px;background:#ee3366;"></div>
<div class="a" style="left:325.75px;top:370.6px;width:70.5px;height:115.9px;background:#b7d9fa;"></div>
<span class="t" style="left:0;top:358px;font-size:8.6px;color:#525252;transform:matrix(0.980,0,0,1,327.50,0);">Ab</span>
<span class="t" style="left:0;top:359px;font-size:7.3px;color:#3a3a3a;transform:matrix(0.950,0,0,1,340.22,0);font-weight:700;">Customer</span>
<span class="t" style="left:0;top:357px;font-size:10.5px;color:#525252;transform:matrix(0.905,0,0,1,399.25,0);">#</span>
<span class="t" style="left:0;top:359px;font-size:7.3px;color:#3a3a3a;transform:matrix(0.983,0,0,1,410.05,0);font-weight:700;">Account Number</span>
<span class="t" style="left:0;top:358px;font-size:8.6px;color:#525252;transform:matrix(0.980,0,0,1,490.50,0);">Ab</span>
<span class="t" style="left:0;top:359px;font-size:7.3px;color:#3a3a3a;transform:matrix(0.961,0,0,1,502.96,0);font-weight:700;">Contact</span>
<span class="t" style="left:0;top:357px;font-size:10.5px;color:#525252;transform:matrix(1.034,0,0,1,550.00,0);">#</span>
<span class="t" style="left:0;top:359px;font-size:7.3px;color:#3a3a3a;transform:matrix(1.003,0,0,1,560.95,0);font-weight:700;">Order Number</span>
<svg class="a" style="left:636px;top:357.8px" width="9" height="9" viewBox="0 0 9 9"><circle cx="4.4" cy="4.4" r="3.8" fill="none" stroke="#777" stroke-width="0.7"/><path d="M2.6 3.2L4.4 4.6L6.4 3" fill="none" stroke="#777" stroke-width="0.6"/></svg>
<span class="t" style="left:0;top:359px;font-size:7.3px;color:#3a3a3a;transform:matrix(0.979,0,0,1,647.80,0);font-weight:700;">Ship Date</span>
<span class="t" style="left:0;top:358px;font-size:8.6px;color:#525252;transform:matrix(0.980,0,0,1,705.00,0);">Ab</span>
<span class="t" style="left:0;top:359px;font-size:7.3px;color:#3a3a3a;transform:matrix(1.010,0,0,1,717.74,0);font-weight:700;">Media Qty</span>
<span class="t" style="left:0;top:357px;font-size:10.5px;color:#525252;transform:matrix(0.948,0,0,1,777.00,0);">#</span>
<span class="t" style="left:0;top:359px;font-size:7.3px;color:#3a3a3a;transform:matrix(0.999,0,0,1,787.50,0);font-weight:700;">Media Qty1</span>
<span class="t" style="left:0;top:358px;font-size:8.6px;color:#525252;transform:matrix(0.980,0,0,1,850.50,0);">Ab</span>
<span class="t" style="left:0;top:359px;font-size:7.3px;color:#3a3a3a;transform:matrix(0.988,0,0,1,863.26,0);font-weight:700;">Descript</span>
<div class="a" style="left:395.75px;top:370.3px;width:1.0px;height:116.2px;background:#e5e5e5;"></div>
<div class="a" style="left:487.75px;top:370.3px;width:1.0px;height:116.2px;background:#e5e5e5;"></div>
<div class="a" style="left:546.0px;top:370.3px;width:1.0px;height:116.2px;background:#e5e5e5;"></div>
<div class="a" style="left:632.75px;top:370.3px;width:1.0px;height:116.2px;background:#e5e5e5;"></div>
<div class="a" style="left:702.75px;top:370.3px;width:1.0px;height:116.2px;background:#e5e5e5;"></div>
<div class="a" style="left:772.75px;top:370.3px;width:1.0px;height:116.2px;background:#e5e5e5;"></div>
<div class="a" style="left:847.75px;top:370.3px;width:1.0px;height:116.2px;background:#e5e5e5;"></div>
<div class="a" style="left:325.3px;top:370.3px;width:0.9px;height:116.2px;background:#e4e4e4;"></div>
<div class="a" style="left:311px;top:381.8px;width:580.3px;height:0.9px;background:#e5e5e5;"></div>
<span class="t" style="left:0;top:372px;font-size:7.4px;color:#3a3a3a;transform:matrix(0.920,0,0,1,315.94,0);">1</span>
<span class="t" style="left:0;top:372px;font-size:7.4px;color:#3a3a3a;transform:matrix(0.920,0,0,1,328.35,0);">Betty&#x27;s Music Store</span>
<span class="t" style="left:0;top:372px;font-size:7.4px;color:#3a3a3a;transform:matrix(0.920,0,0,1,467.48,0);">11887</span>
<span class="t" style="left:0;top:372px;font-size:7.4px;color:#3a3a3a;transform:matrix(0.920,0,0,1,491.35,0);">Betty Yoder</span>
<span class="t" style="left:0;top:372px;font-size:7.4px;color:#3a3a3a;transform:matrix(0.920,0,0,1,608.44,0);">536017</span>
<span class="t" style="left:0;top:372px;font-size:7.4px;color:#3a3a3a;transform:matrix(0.955,0,0,1,669.57,0);">4/10/2010</span>
<span class="t" style="left:0;top:372px;font-size:7.4px;color:#3a3a3a;transform:matrix(0.920,0,0,1,706.03,0);">CD</span>
<span class="t" style="left:0;top:372px;font-size:7.4px;color:#3a3a3a;transform:matrix(0.920,0,0,1,842.21,0);">4</span>
<span class="t" style="left:0;top:372px;font-size:7.4px;color:#3a3a3a;transform:matrix(0.895,0,0,1,851.56,0);">Bartok, Sonat</span>
<div class="a" style="left:311px;top:394.3px;width:580.3px;height:0.9px;background:#e5e5e5;"></div>
<span class="t" style="left:0;top:385px;font-size:7.4px;color:#3a3a3a;transform:matrix(0.920,0,0,1,316.12,0);">2</span>
<span class="t" style="left:0;top:385px;font-size:7.4px;color:#3a3a3a;transform:matrix(0.920,0,0,1,328.35,0);">Betty&#x27;s Music Store</span>
<span class="t" style="left:0;top:385px;font-size:7.4px;color:#3a3a3a;transform:matrix(0.920,0,0,1,467.48,0);">11887</span>
<span class="t" style="left:0;top:385px;font-size:7.4px;color:#3a3a3a;transform:matrix(0.920,0,0,1,491.35,0);">Betty Yoder</span>
<span class="t" style="left:0;top:385px;font-size:7.4px;color:#3a3a3a;transform:matrix(0.920,0,0,1,608.44,0);">536017</span>
<span class="t" style="left:0;top:385px;font-size:7.4px;color:#3a3a3a;transform:matrix(0.955,0,0,1,669.57,0);">4/10/2010</span>
<span class="t" style="left:0;top:385px;font-size:7.4px;color:#3a3a3a;transform:matrix(0.920,0,0,1,706.40,0);"></span>
<span class="t" style="left:0;top:385px;font-size:7.4px;color:#3a3a3a;transform:matrix(0.920,0,0,1,842.30,0);">7</span>
<span class="t" style="left:0;top:385px;font-size:7.4px;color:#3a3a3a;transform:matrix(0.895,0,0,1,851.56,0);">Mozart, Mass</span>
<div class="a" style="left:311px;top:406.8px;width:580.3px;height:0.9px;background:#e5e5e5;"></div>
<span class="t" style="left:0;top:397px;font-size:7.4px;color:#3a3a3a;transform:matrix(0.920,0,0,1,316.12,0);">3</span>
<span class="t" style="left:0;top:397px;font-size:7.4px;color:#3a3a3a;transform:matrix(0.920,0,0,1,328.35,0);">Betty&#x27;s Music Store</span>
<span class="t" style="left:0;top:397px;font-size:7.4px;color:#3a3a3a;transform:matrix(0.920,0,0,1,467.48,0);">11887</span>
<span class="t" style="left:0;top:397px;font-size:7.4px;color:#3a3a3a;transform:matrix(0.920,0,0,1,491.35,0);">Betty Yoder</span>
<span class="t" style="left:0;top:397px;font-size:7.4px;color:#3a3a3a;transform:matrix(0.920,0,0,1,608.44,0);">536017</span>
<span class="t" style="left:0;top:397px;font-size:7.4px;color:#3a3a3a;transform:matrix(0.955,0,0,1,669.57,0);">4/10/2010</span>
<span class="t" style="left:0;top:397px;font-size:7.4px;color:#3a3a3a;transform:matrix(0.920,0,0,1,706.40,0);"></span>
<span class="t" style="left:0;top:397px;font-size:7.4px;color:#3a3a3a;transform:matrix(0.920,0,0,1,842.30,0);">2</span>
<span class="t" style="left:0;top:397px;font-size:7.4px;color:#3a3a3a;transform:matrix(0.895,0,0,1,851.56,0);">Luening, Elec</span>
<div class="a" style="left:311px;top:419.3px;width:580.3px;height:0.9px;background:#e5e5e5;"></div>
<span class="t" style="left:0;top:410px;font-size:7.4px;color:#3a3a3a;transform:matrix(0.920,0,0,1,316.31,0);">4</span>
<span class="t" style="left:0;top:410px;font-size:7.4px;color:#3a3a3a;transform:matrix(0.920,0,0,1,328.35,0);">Betty&#x27;s Music Store</span>
<span class="t" style="left:0;top:410px;font-size:7.4px;color:#3a3a3a;transform:matrix(0.920,0,0,1,467.48,0);">11887</span>
<span class="t" style="left:0;top:410px;font-size:7.4px;color:#3a3a3a;transform:matrix(0.920,0,0,1,491.35,0);">Betty Yoder</span>
<span class="t" style="left:0;top:410px;font-size:7.4px;color:#3a3a3a;transform:matrix(0.920,0,0,1,608.44,0);">536017</span>
<span class="t" style="left:0;top:410px;font-size:7.4px;color:#3a3a3a;transform:matrix(0.955,0,0,1,669.57,0);">4/10/2010</span>
<span class="t" style="left:0;top:410px;font-size:7.4px;color:#3a3a3a;transform:matrix(0.920,0,0,1,705.85,0);">DVD</span>
<span class="t" style="left:0;top:410px;font-size:7.4px;color:#3a3a3a;transform:matrix(0.920,0,0,1,842.30,0);">9</span>
<span class="t" style="left:0;top:410px;font-size:7.4px;color:#3a3a3a;transform:matrix(0.895,0,0,1,851.83,0);">Scarlatti, Stab</span>
<div class="a" style="left:311px;top:431.8px;width:580.3px;height:0.9px;background:#e5e5e5;"></div>
<span class="t" style="left:0;top:422px;font-size:7.4px;color:#3a3a3a;transform:matrix(0.920,0,0,1,316.12,0);">5</span>
<span class="t" style="left:0;top:422px;font-size:7.4px;color:#3a3a3a;transform:matrix(0.920,0,0,1,328.35,0);">Betty&#x27;s Music Store</span>
<span class="t" style="left:0;top:422px;font-size:7.4px;color:#3a3a3a;transform:matrix(0.920,0,0,1,467.48,0);">11887</span>
<span class="t" style="left:0;top:422px;font-size:7.4px;color:#3a3a3a;transform:matrix(0.920,0,0,1,491.35,0);">Betty Yoder</span>
<span class="t" style="left:0;top:422px;font-size:7.4px;color:#3a3a3a;transform:matrix(0.920,0,0,1,608.35,0);">536039</span>
<span class="t" style="left:0;top:422px;font-size:7.4px;color:#3a3a3a;transform:matrix(0.955,0,0,1,669.57,0);">4/21/2010</span>
<span class="t" style="left:0;top:422px;font-size:7.4px;color:#3a3a3a;transform:matrix(0.920,0,0,1,706.03,0);">CD</span>
<span class="t" style="left:0;top:422px;font-size:7.4px;color:#3a3a3a;transform:matrix(0.920,0,0,1,838.99,0);">11</span>
<span class="t" style="left:0;top:422px;font-size:7.4px;color:#3a3a3a;transform:matrix(0.895,0,0,1,851.56,0);">Beethoven, P</span>
<div class="a" style="left:311px;top:444.3px;width:580.3px;height:0.9px;background:#e5e5e5;"></div>
<span class="t" style="left:0;top:435px;font-size:7.4px;color:#3a3a3a;transform:matrix(0.920,0,0,1,316.03,0);">6</span>
<span class="t" style="left:0;top:435px;font-size:7.4px;color:#3a3a3a;transform:matrix(0.920,0,0,1,328.35,0);">Betty&#x27;s Music Store</span>
<span class="t" style="left:0;top:435px;font-size:7.4px;color:#3a3a3a;transform:matrix(0.920,0,0,1,467.48,0);">11887</span>
<span class="t" style="left:0;top:435px;font-size:7.4px;color:#3a3a3a;transform:matrix(0.920,0,0,1,491.35,0);">Betty Yoder</span>
<span class="t" style="left:0;top:435px;font-size:7.4px;color:#3a3a3a;transform:matrix(0.920,0,0,1,608.35,0);">536039</span>
<span class="t" style="left:0;top:435px;font-size:7.4px;color:#3a3a3a;transform:matrix(0.955,0,0,1,669.57,0);">4/21/2010</span>
<span class="t" style="left:0;top:435px;font-size:7.4px;color:#3a3a3a;transform:matrix(0.920,0,0,1,706.40,0);"></span>
<span class="t" style="left:0;top:435px;font-size:7.4px;color:#3a3a3a;transform:matrix(0.920,0,0,1,842.30,0);">8</span>
<span class="t" style="left:0;top:435px;font-size:7.4px;color:#3a3a3a;transform:matrix(0.895,0,0,1,851.56,0);">Mendelssohn</span>
<div class="a" style="left:311px;top:456.8px;width:580.3px;height:0.9px;background:#e5e5e5;"></div>
<span class="t" style="left:0;top:447px;font-size:7.4px;color:#3a3a3a;transform:matrix(0.920,0,0,1,316.03,0);">7</span>
<span class="t" style="left:0;top:447px;font-size:7.4px;color:#3a3a3a;transform:matrix(0.920,0,0,1,328.35,0);">Betty&#x27;s Music Store</span>
<span class="t" style="left:0;top:447px;font-size:7.4px;color:#3a3a3a;transform:matrix(0.920,0,0,1,467.48,0);">11887</span>
<span class="t" style="left:0;top:447px;font-size:7.4px;color:#3a3a3a;transform:matrix(0.920,0,0,1,491.35,0);">Betty Yoder</span>
<span class="t" style="left:0;top:447px;font-size:7.4px;color:#3a3a3a;transform:matrix(0.920,0,0,1,608.35,0);">536039</span>
<span class="t" style="left:0;top:447px;font-size:7.4px;color:#3a3a3a;transform:matrix(0.955,0,0,1,669.57,0);">4/21/2010</span>
<span class="t" style="left:0;top:447px;font-size:7.4px;color:#3a3a3a;transform:matrix(0.920,0,0,1,706.40,0);"></span>
<span class="t" style="left:0;top:447px;font-size:7.4px;color:#3a3a3a;transform:matrix(0.920,0,0,1,838.44,0);">10</span>
<span class="t" style="left:0;top:447px;font-size:7.4px;color:#3a3a3a;transform:matrix(0.895,0,0,1,851.56,0);">Pizzetti, Mess</span>
<div class="a" style="left:311px;top:469.3px;width:580.3px;height:0.9px;background:#e5e5e5;"></div>
<span class="t" style="left:0;top:460px;font-size:7.4px;color:#3a3a3a;transform:matrix(0.920,0,0,1,316.12,0);">8</span>
<span class="t" style="left:0;top:460px;font-size:7.4px;color:#3a3a3a;transform:matrix(0.920,0,0,1,328.35,0);">Betty&#x27;s Music Store</span>
<span class="t" style="left:0;top:460px;font-size:7.4px;color:#3a3a3a;transform:matrix(0.920,0,0,1,467.48,0);">11887</span>
<span class="t" style="left:0;top:460px;font-size:7.4px;color:#3a3a3a;transform:matrix(0.920,0,0,1,491.35,0);">Betty Yoder</span>
<span class="t" style="left:0;top:460px;font-size:7.4px;color:#3a3a3a;transform:matrix(0.920,0,0,1,608.35,0);">536039</span>
<span class="t" style="left:0;top:460px;font-size:7.4px;color:#3a3a3a;transform:matrix(0.955,0,0,1,669.57,0);">4/21/2010</span>
<span class="t" style="left:0;top:460px;font-size:7.4px;color:#3a3a3a;transform:matrix(0.920,0,0,1,705.85,0);">LP</span>
<span class="t" style="left:0;top:460px;font-size:7.4px;color:#3a3a3a;transform:matrix(0.920,0,0,1,842.30,0);">6</span>
<span class="t" style="left:0;top:460px;font-size:7.4px;color:#3a3a3a;transform:matrix(0.895,0,0,1,851.56,0);">Misc., Moder</span>
<div class="a" style="left:311px;top:481.8px;width:580.3px;height:0.9px;background:#e5e5e5;"></div>
<span class="t" style="left:0;top:472px;font-size:7.4px;color:#3a3a3a;transform:matrix(0.920,0,0,1,316.12,0);">9</span>
<span class="t" style="left:0;top:472px;font-size:7.4px;color:#3a3a3a;transform:matrix(0.920,0,0,1,328.35,0);">Betty&#x27;s Music Store</span>
<span class="t" style="left:0;top:472px;font-size:7.4px;color:#3a3a3a;transform:matrix(0.920,0,0,1,467.48,0);">11887</span>
<span class="t" style="left:0;top:472px;font-size:7.4px;color:#3a3a3a;transform:matrix(0.920,0,0,1,491.35,0);">Betty Yoder</span>
<span class="t" style="left:0;top:472px;font-size:7.4px;color:#3a3a3a;transform:matrix(0.920,0,0,1,608.35,0);">536039</span>
<span class="t" style="left:0;top:472px;font-size:7.4px;color:#3a3a3a;transform:matrix(0.955,0,0,1,669.57,0);">4/21/2010</span>
<span class="t" style="left:0;top:472px;font-size:7.4px;color:#3a3a3a;transform:matrix(0.920,0,0,1,705.85,0);">DVD</span>
<span class="t" style="left:0;top:472px;font-size:7.4px;color:#3a3a3a;transform:matrix(0.920,0,0,1,842.30,0);">6</span>
<span class="t" style="left:0;top:472px;font-size:7.4px;color:#3a3a3a;transform:matrix(0.895,0,0,1,851.83,0);">Gershwin, An</span>
<div class="a" style="left:311px;top:494.3px;width:580.3px;height:0.9px;background:#e5e5e5;"></div>
<span class="t" style="left:0;top:484px;font-size:7.4px;color:#3a3a3a;transform:matrix(0.920,0,0,1,313.94,0);">10</span>
<span class="t" style="left:0;top:484px;font-size:7.4px;color:#3a3a3a;transform:matrix(0.920,0,0,1,328.35,0);">Big Shanty Music</span>
<span class="t" style="left:0;top:484px;font-size:7.4px;color:#3a3a3a;transform:matrix(0.920,0,0,1,467.02,0);">17959</span>
<span class="t" style="left:0;top:484px;font-size:7.4px;color:#3a3a3a;transform:matrix(0.920,0,0,1,491.35,0);">Maggie Mcintyre</span>
<span class="t" style="left:0;top:484px;font-size:7.4px;color:#3a3a3a;transform:matrix(0.920,0,0,1,608.35,0);">536016</span>
<span class="t" style="left:0;top:484px;font-size:7.4px;color:#3a3a3a;transform:matrix(0.955,0,0,1,673.49,0);">4/5/2010</span>
<span class="t" style="left:0;top:484px;font-size:7.4px;color:#3a3a3a;transform:matrix(0.920,0,0,1,706.03,0);">CD</span>
<span class="t" style="left:0;top:484px;font-size:7.4px;color:#3a3a3a;transform:matrix(0.920,0,0,1,842.30,0);">5</span>
<span class="t" style="left:0;top:484px;font-size:7.4px;color:#3a3a3a;transform:matrix(0.895,0,0,1,851.83,0);">Stravinsky, P</span>
<div class="a" style="left:891.3px;top:352.1px;width:8.7px;height:134.4px;background:#ececec;"></div>
<div class="a" style="left:891.3px;top:352.1px;width:8.7px;height:3.5px;background:#c8c8c8;"></div>
<div class="a" style="left:891px;top:355px;width:10px;height:12px;background:#fff;border:1px solid #d4d4d4;"></div>
<div class="a" style="left:891px;top:366px;width:10px;height:6px;background:#fff;border:1px solid #c4c4c4;"></div>
<div class="a" style="left:891px;top:475px;width:10px;height:12px;background:#fff;border:1px solid #d4d4d4;"></div>
<svg class="a" style="left:893.4px;top:359.6px" width="4.8" height="3" viewBox="0 0 4.8 3"><path d="M0.2 2.6L2.4 0.5L4.6 2.6Z" fill="#444"/></svg>
<svg class="a" style="left:893.4px;top:479.6px" width="4.8" height="3" viewBox="0 0 4.8 3"><path d="M0.2 0.4L2.4 2.5L4.6 0.4Z" fill="#444"/></svg>
<div class="a" style="left:311px;top:486.5px;width:589px;height:9.2px;background:#ececec;"></div>
<div class="a" style="left:311px;top:486px;width:12px;height:11px;background:#fff;border:1px solid #d4d4d4;"></div>
<div class="a" style="left:322px;top:486px;width:399px;height:11px;background:#fff;border:1px solid #d4d4d4;"></div>
<div class="a" style="left:880px;top:486px;width:12px;height:11px;background:#fff;border:1px solid #d4d4d4;"></div>
<svg class="a" style="left:315.3px;top:488.7px" width="3" height="4.8" viewBox="0 0 3 4.8"><path d="M2.9 0L0.1 2.4L2.9 4.8Z" fill="#444"/></svg>
<svg class="a" style="left:884.5999999999999px;top:488.7px" width="3" height="4.8" viewBox="0 0 3 4.8"><path d="M0.1 0L2.9 2.4L0.1 4.8Z" fill="#444"/></svg>
<div class="a" style="left:310px;top:23.4px;width:1px;height:472.2px;background:#f27a9b;"></div>
<div class="a" style="left:0px;top:495px;width:900px;height:1px;background:rgba(23,54,84,0.4);"></div>
<div class="a" style="left:0px;top:495.6px;width:900px;height:18.4px;background:#173654;"></div>
<div class="a" style="left:875.8px;top:495.6px;width:24.2px;height:18.4px;background:#336a99;"></div>
<svg class="a" style="left:881px;top:498.5px" width="14" height="13" viewBox="0 0 14 13"><path d="M1 0.9H13M1 11.8H13" stroke="#d5e2ef" stroke-width="0.7"/><path d="M7 2.6V10.2M5.6 4.2L7 2.6L8.4 4.2M5.6 8.6L7 10.2L8.4 8.6" fill="none" stroke="#d5e2ef" stroke-width="0.65"/></svg>
</div>
</body></html>
